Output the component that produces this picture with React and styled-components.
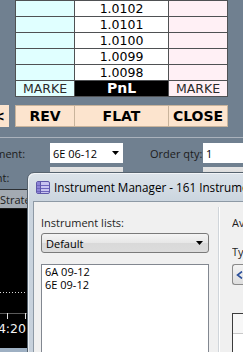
import React from 'react';
import styled, { createGlobalStyle } from 'styled-components';

const Global = createGlobalStyle`
  html, body { margin: 0; padding: 0; }
  body { width: 243px; height: 352px; overflow: hidden; background: #708090; }
`;

const Screen = styled.div`
  position: relative;
  width: 243px;
  height: 352px;
  overflow: hidden;
  background: #708090;
  font-family: "Open Sans", "Noto Sans", sans-serif;
`;

const Ladder = styled.div`
  margin-left: 15px;
  width: max-content;
  display: grid;
  grid-template-columns: 58px 93px 58px;
  grid-auto-rows: 15px;
  gap: 1px;
  padding: 1px;
  background: #4f5153;
`;

const tones = { bid: '#e0ffff', price: '#ffffff', ask: '#fff0f5', pnl: '#000000' };

const Cell = styled.div`
  display: flex;
  align-items: center;
  justify-content: center;
  overflow: hidden;
  white-space: nowrap;
  font-family: "DejaVu Sans", Verdana, sans-serif;
  font-size: ${p => (p.$tone === 'pnl' ? '14px' : '12.5px')};
  font-weight: ${p => (p.$tone === 'pnl' ? 700 : 400)};
  line-height: 15px;
  color: ${p => (p.$tone === 'pnl' ? '#ffffff' : p.$dim ? '#2a2a2a' : '#000')};
  background: ${p => tones[p.$tone]};
`;

const ButtonRow = styled.div`
  display: flex;
  margin-top: 8px;
  height: 22px;
`;

const Stub = styled.div`
  width: 9px;
  margin-right: 6px;
  background: #fce4ce;
  display: flex;
  align-items: center;
  justify-content: flex-end;
  overflow: hidden;
  padding-right: 4px;
  box-sizing: border-box;
  font: 700 14px "DejaVu Sans", Verdana, sans-serif;
  color: #000;
`;

const ButtonGrid = styled.div`
  display: grid;
  grid-template-columns: 58px 93px 58px;
  gap: 1px;
  padding: 1px;
  background: #c9b49c;
`;

const ActionButton = styled.div`
  background: #fce4ce;
  display: flex;
  align-items: center;
  justify-content: center;
  font: 700 14px "DejaVu Sans", Verdana, sans-serif;
  color: #000;
`;

const Divider = styled.div`
  margin-top: 10px;
  height: 1px;
  background: #aab2bc;
`;

const FormRow = styled.div`
  display: flex;
  align-items: center;
  height: 20px;
  margin-top: ${p => p.$top}px;
  margin-left: -35px;
`;

const Label = styled.div`
  width: ${p => p.$w}px;
  flex-shrink: 0;
  font-size: 11px;
  color: #1c1c1c;
  white-space: nowrap;
  margin-left: ${p => p.$before || 0}px;
  margin-right: ${p => p.$gap}px;
`;

const Combo = styled.div`
  width: 73px;
  height: 20px;
  flex-shrink: 0;
  box-sizing: border-box;
  background: ${p => (p.$muted ? 'linear-gradient(#e4e4e4, #c9c9c9)' : '#ffffff')};
  display: flex;
  align-items: center;
  justify-content: space-between;
  padding: 0 4px 0 3px;
  font-size: 11px;
  color: #000;
`;

const Field = styled.div`
  flex: 1;
  height: 20px;
  box-sizing: border-box;
  background: ${p => (p.$muted ? 'linear-gradient(#e4e4e4, #c9c9c9)' : '#ffffff')};
  display: flex;
  align-items: center;
  padding-left: 3px;
  margin-left: ${p => p.$before || 0}px;
  font-size: 11px;
  color: #000;
`;

const Band = styled.div`
  margin-top: 2px;
  height: 18px;
  border-top: 1px solid #2c2f33;
  background: #a3aab2;
  display: flex;
  align-items: center;
  font-size: 11px;
  color: #1c1c1c;
  white-space: nowrap;
`;

const Chart = styled.div`
  height: 139px;
  background: #000;
  border-top: 1px solid #1a1a1a;
`;

const Scroll = styled.div`
  height: 6px;
  background: #9eb0c3;
`;

const Dialog = styled.div`
  position: absolute;
  left: 27px;
  top: 172px;
  width: 260px;
  height: 200px;
  box-sizing: border-box;
  border: 1px solid #56636f;
  border-radius: 7px 7px 0 0;
  background: linear-gradient(#dce3ea 0px, #cbd5df 28px, #c6d0db 100%);
  box-shadow: inset 1px 1px 0 rgba(255, 255, 255, 0.6);
  display: flex;
  flex-direction: column;
`;

const TitleBar = styled.div`
  height: 28px;
  display: flex;
  align-items: center;
  padding-left: 8px;
  gap: 4px;
  white-space: nowrap;
  font-size: 11.7px;
  color: #000;
`;

const Client = styled.div`
  margin-left: 5px;
  flex: 1;
  border: 1px solid #8d99a5;
  border-bottom: none;
  border-right: none;
  background: #f0f0f0;
  display: flex;
  padding-left: 7px;
`;

const Pane = styled.div`
  width: ${p => (p.$w ? `${p.$w}px` : 'auto')};
  flex: ${p => (p.$w ? 'none' : 1)};
  display: flex;
  flex-direction: column;
  padding-top: 13px;
  font-size: 11px;
  color: #1e1e1e;
  white-space: nowrap;
  overflow: hidden;
`;

const PaneLabel = styled.div`
  line-height: 15px;
  margin-top: ${p => p.$top || 0}px;
`;

const Select = styled.div`
  margin-top: 3px;
  height: 20px;
  box-sizing: border-box;
  border: 1px solid #7a7a7a;
  border-radius: 3px;
  background: linear-gradient(#f4f4f4, #e7e7e7 50%, #d9d9d9 51%, #dcdcdc);
  display: flex;
  align-items: center;
  justify-content: space-between;
  padding: 0 5px 0 4px;
  color: #000;
`;

const ListBox = styled.div`
  margin-top: 11px;
  flex: 1;
  border: 1px solid #828790;
  border-bottom: none;
  background: #fff;
  padding-left: 3px;
  color: #000;
`;

const ListItem = styled.div`
  height: 13px;
  line-height: 13px;
`;

const Separator = styled.div`
  width: 1px;
  margin: 5px 12px 0 9px;
  background: #d0d5da;
  border-right: 1px solid #ffffff;
`;

const SmallButton = styled.div`
  margin-top: 5px;
  height: 21px;
  box-sizing: border-box;
  border: 1px solid #8a8a8a;
  border-right: none;
  border-radius: 3px 0 0 3px;
  background: linear-gradient(#f4f4f4, #dedede);
  display: flex;
  align-items: center;
  padding-left: 3px;
`;

const Grid = styled.div`
  margin-top: 28px;
  flex: 1;
  border: 1px solid #3c3c3c;
  border-right: none;
  border-bottom: none;
  background: linear-gradient(#f7f7f7 0, #f7f7f7 19px, #c9c9c9 19px, #c9c9c9 20px, #ffffff 20px);
`;

const Arrow = ({ color = '#000' }) => (
  <svg width="7" height="4" viewBox="0 0 7 4">
    <path d="M0 0 H7 L3.5 4 Z" fill={color} />
  </svg>
);

const WindowIcon = () => (
  <svg width="14" height="14" viewBox="0 0 14 14">
    <rect x="0.5" y="1.5" width="13" height="12" rx="1.5" fill="#c9c4ef" stroke="#5f58a8" />
    <rect x="1" y="2" width="3.5" height="11" fill="#8c84d6" />
    <path d="M1 5.5 H13 M1 8.5 H13 M1 11.5 H13" stroke="#6d65bd" strokeWidth="1" />
    <path d="M4.5 2 V13" stroke="#5f58a8" strokeWidth="1" />
  </svg>
);

const ChartDrawing = () => (
  <svg width="243" height="139" viewBox="0 0 243 139" style={{ display: 'block' }}>
    <line x1="0" y1="83.5" x2="27" y2="83.5" stroke="#d8d8d8" strokeDasharray="1 2" />
    <line x1="0" y1="104.5" x2="27" y2="104.5" stroke="#5a5a5a" />
    <line x1="7.5" y1="104" x2="7.5" y2="110" stroke="#e0e0e0" />
    <line x1="25.5" y1="104" x2="25.5" y2="110" stroke="#e0e0e0" />
    <text x="26" y="124" textAnchor="end" fill="#f2f2f2" fontFamily="DejaVu Sans, Verdana, sans-serif" fontSize="12.5">14:20</text>
  </svg>
);

const prices = ['1.0102', '1.0101', '1.0100', '1.0099', '1.0098'];

export default function App() {
  return (
    <>
      <Global />
      <Screen>
        <Ladder>
          {prices.map(p => (
            <React.Fragment key={p}>
              <Cell $tone="bid" />
              <Cell $tone="price">{p}</Cell>
              <Cell $tone="ask" />
            </React.Fragment>
          ))}
          <Cell $tone="bid" $dim>MARKE</Cell>
          <Cell $tone="pnl">PnL</Cell>
          <Cell $tone="ask" $dim>MARKE</Cell>
        </Ladder>

        <ButtonRow>
          <Stub>&lt;</Stub>
          <ButtonGrid>
            <ActionButton>REV</ActionButton>
            <ActionButton>FLAT</ActionButton>
            <ActionButton>CLOSE</ActionButton>
          </ButtonGrid>
        </ButtonRow>

        <Divider />

        <FormRow $top={5}>
          <Label $w={62} $gap={23}>Instrument:</Label>
          <Combo>
            <span>6E 06-12</span>
            <Arrow />
          </Combo>
          <Label $w={53} $gap={0} $before={27}>Order qty:</Label>
          <Field>1</Field>
        </FormRow>

        <FormRow $top={4}>
          <Label $w={62} $gap={23}>Account:</Label>
          <Combo $muted />
          <Field $muted $before={80} />
        </FormRow>

        <Band>Strategies</Band>
        <Chart>
          <ChartDrawing />
        </Chart>
        <Scroll />

        <Dialog>
          <TitleBar>
            <WindowIcon />
            <span>Instrument Manager - 161 Instruments</span>
          </TitleBar>
          <Client>
            <Pane $w={168}>
              <PaneLabel>Instrument lists:</PaneLabel>
              <Select>
                <span>Default</span>
                <Arrow />
              </Select>
              <ListBox>
                <ListItem>6A 09-12</ListItem>
                <ListItem>6E 09-12</ListItem>
              </ListBox>
            </Pane>
            <Separator />
            <Pane>
              <PaneLabel>Available instruments:</PaneLabel>
              <PaneLabel $top={14}>Type:</PaneLabel>
              <SmallButton>
                <svg width="8" height="8" viewBox="0 0 8 8">
                  <path d="M6 0.5 L1.5 4 L6 7.5" fill="none" stroke="#2b4f9a" strokeWidth="1.6" />
                </svg>
              </SmallButton>
              <Grid />
            </Pane>
          </Client>
        </Dialog>
      </Screen>
    </>
  );
}
